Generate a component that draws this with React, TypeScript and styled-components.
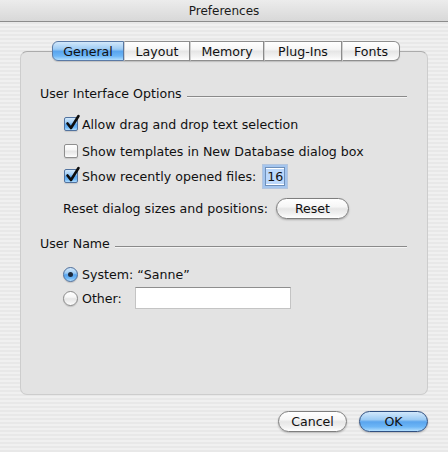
import React from 'react';
import styled, { createGlobalStyle, css } from 'styled-components';

const GlobalStyle = createGlobalStyle`
  html, body { margin: 0; padding: 0; }
  body {
    font-family: 'DejaVu Sans', 'Lucida Grande', sans-serif;
    font-size: 12.6px;
    color: #111;
  }
`;

const aquaBlue = css`
  background: linear-gradient(
    to bottom,
    #d2e8fb 0%,
    #9ccbf4 40%,
    #5aa5ee 52%,
    #6db6f6 78%,
    #b2defe 100%
  );
`;

const aquaWhite = css`
  background: linear-gradient(
    to bottom,
    #ffffff 0%,
    #f6f6f6 40%,
    #e6e6e6 52%,
    #f1f1f1 78%,
    #ffffff 100%
  );
`;

const Window = styled.div`
  width: 448px;
  height: 452px;
  display: flex;
  flex-direction: column;
  overflow: hidden;
  background: repeating-linear-gradient(
    to bottom,
    #f0f0f0 0,
    #f0f0f0 2px,
    #e8e8e8 2px,
    #e8e8e8 4px
  );
`;

const TitleBar = styled.div`
  height: 21px;
  flex: none;
  display: flex;
  align-items: center;
  justify-content: center;
  font-size: 12px;
  color: #1a1a1a;
  border-bottom: 1px solid #8c8c8c;
  background: linear-gradient(to bottom, #ececec, #d8d8d8);
`;

const Body = styled.div`
  flex: 1;
  display: flex;
  flex-direction: column;
  padding: 19px 20px 0;
`;

const TabRow = styled.div`
  display: flex;
  height: 20px;
  padding-left: 32px;
  position: relative;
  z-index: 1;
`;

const Tab = styled.div<{ $w: number; $active?: boolean; $first?: boolean; $last?: boolean }>`
  width: ${(p) => p.$w}px;
  box-sizing: border-box;
  height: 20px;
  display: flex;
  align-items: center;
  justify-content: center;
  border: 1px solid #8e8e8e;
  border-left: ${(p) => (p.$first ? '1px solid #8e8e8e' : '1px solid #cfcfcf')};
  border-radius: ${(p) => (p.$first ? '6px 0 0 6px' : p.$last ? '0 6px 6px 0' : '0')};
  ${(p) => (p.$active ? aquaBlue : aquaWhite)};
  ${(p) =>
    p.$active &&
    css`
      border-color: #5b7aa5;
    `}
  box-shadow: 0 1px 1px rgba(0, 0, 0, 0.15);
`;

const Group = styled.div`
  margin-top: -10px;
  height: 344px;
  box-sizing: border-box;
  background: #e3e3e3;
  border: 1px solid #cdcdcd;
  border-top-color: #ababab;
  border-radius: 7px;
  padding: 33px 20px 0 19px;
  display: flex;
  flex-direction: column;
`;

const SectionHead = styled.div<{ $mt?: number }>`
  display: flex;
  align-items: center;
  height: 16px;
  margin-top: ${(p) => p.$mt ?? 0}px;
  gap: 5px;
  &::after {
    content: '';
    flex: 1;
    height: 1px;
    margin-top: 7px;
    background: #8a8a8a;
    box-shadow: 0 1px 0 #f4f4f4;
  }
`;

const Row = styled.div<{ $mt: number; $indent?: number }>`
  display: flex;
  align-items: center;
  height: 24px;
  margin-top: ${(p) => p.$mt}px;
  margin-left: ${(p) => p.$indent ?? 24}px;
  gap: 4px;
  white-space: nowrap;
`;

const Box = styled.span<{ $on?: boolean }>`
  position: relative;
  width: 14px;
  height: 14px;
  box-sizing: border-box;
  flex: none;
  border: 1px solid ${(p) => (p.$on ? '#52739f' : '#8f8f8f')};
  border-radius: 2px;
  ${(p) => (p.$on ? aquaBlue : aquaWhite)};
  box-shadow: 0 1px 1px rgba(0, 0, 0, 0.12);
`;

const Tick = styled.svg`
  position: absolute;
  left: 1px;
  top: -3px;
  overflow: visible;
`;

const Radio = styled.span<{ $on?: boolean }>`
  width: 15px;
  height: 15px;
  box-sizing: border-box;
  flex: none;
  border-radius: 50%;
  border: 1px solid ${(p) => (p.$on ? '#4d6d99' : '#8a8a8a')};
  ${(p) => (p.$on ? aquaBlue : aquaWhite)};
  display: flex;
  align-items: center;
  justify-content: center;
  box-shadow: 0 1px 1px rgba(0, 0, 0, 0.15);
  &::after {
    content: '';
    display: ${(p) => (p.$on ? 'block' : 'none')};
    width: 5px;
    height: 5px;
    border-radius: 50%;
    background: #1c2a3c;
  }
`;

const NumField = styled.span`
  margin-left: 5px;
  width: 20px;
  height: 19px;
  box-sizing: border-box;
  display: flex;
  align-items: center;
  justify-content: center;
  background: #fff;
  border: 1px solid #6f8fb8;
  box-shadow: 0 0 0 2px #a4c5ee, 0 0 0 3px rgba(120, 160, 215, 0.45);
  & > span {
    background: #bcd8fb;
    padding: 0 1px;
  }
`;

const TextField = styled.span<{ $w: number }>`
  margin-left: 9px;
  width: ${(p) => p.$w}px;
  height: 22px;
  box-sizing: border-box;
  background: #fff;
  border: 1px solid #c4c4c4;
  border-top-color: #8e8e8e;
`;

const PillButton = styled.button<{ $w: number; $primary?: boolean }>`
  width: ${(p) => p.$w}px;
  height: 21px;
  box-sizing: border-box;
  padding: 0;
  font: inherit;
  color: #111;
  border-radius: 11px;
  border: 1px solid ${(p) => (p.$primary ? '#2f4f80' : '#7e7e7e')};
  ${(p) => (p.$primary ? aquaBlue : aquaWhite)};
  box-shadow: 0 1px 2px rgba(0, 0, 0, 0.25);
`;

const Footer = styled.div`
  display: flex;
  justify-content: flex-end;
  gap: 12px;
  margin-top: 16px;
`;

const tabs = [
  { label: 'General', w: 72 },
  { label: 'Layout', w: 66 },
  { label: 'Memory', w: 74 },
  { label: 'Plug-Ins', w: 78 },
  { label: 'Fonts', w: 58 },
];

function Check({ on }: { on?: boolean }) {
  return (
    <Box $on={on}>
      {on && (
        <Tick width="14" height="15" viewBox="0 0 14 15">
          <path d="M1.5 8.5 L5 13 L12.5 1" fill="none" stroke="#0d0d0d" strokeWidth="2.6" strokeLinecap="round" strokeLinejoin="round" />
        </Tick>
      )}
    </Box>
  );
}

export default function App() {
  return (
    <>
      <GlobalStyle />
      <Window>
        <TitleBar>Preferences</TitleBar>
        <Body>
          <TabRow>
            {tabs.map((t, i) => (
              <Tab key={t.label} $w={t.w} $active={i === 0} $first={i === 0} $last={i === tabs.length - 1}>
                {t.label}
              </Tab>
            ))}
          </TabRow>
          <Group>
            <SectionHead>User Interface Options</SectionHead>
            <Row $mt={11}>
              <Check on />
              Allow drag and drop text selection
            </Row>
            <Row $mt={3}>
              <Check />
              Show templates in New Database dialog box
            </Row>
            <Row $mt={1}>
              <Check on />
              Show recently opened files:
              <NumField>
                <span>16</span>
              </NumField>
            </Row>
            <Row $mt={8} $indent={23}>
              Reset dialog sizes and positions:
              <PillButton $w={73} style={{ marginLeft: 4 }}>
                Reset
              </PillButton>
            </Row>
            <SectionHead $mt={15}>User Name</SectionHead>
            <Row $mt={11} $indent={23}>
              <Radio $on />
              System: “Sanne”
            </Row>
            <Row $mt={0} $indent={23}>
              <Radio />
              Other:
              <TextField $w={156} />
            </Row>
          </Group>
          <Footer>
            <PillButton $w={69}>Cancel</PillButton>
            <PillButton $w={69} $primary>
              OK
            </PillButton>
          </Footer>
        </Body>
      </Window>
    </>
  );
}
